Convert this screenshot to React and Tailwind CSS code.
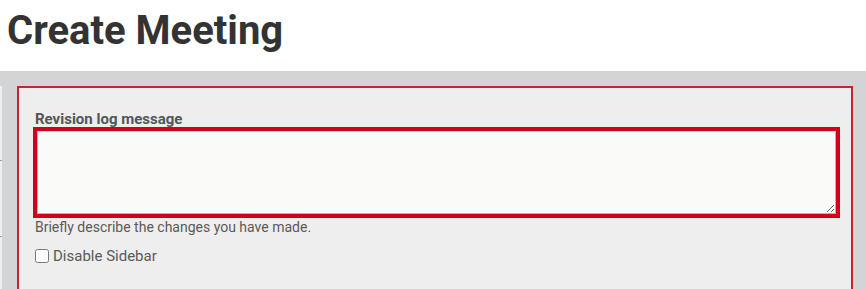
import React from "react"

const App = () => {
  return (
    <div className="min-h-[289px] bg-white font-['Roboto',_'Liberation_Sans',_sans-serif]">
      {/* header */}
      <div className="h-[71px] pt-[11px] pl-[7px]">
        <h1 className="text-[40px] leading-[40px] font-bold text-[#333333]">Create Meeting</h1>
      </div>

      {/* gray band */}
      <div className="flex h-[218px] overflow-hidden bg-[#d3d4d6] pt-[15px]">
        <div className="w-[2px] shrink-0 bg-[#efefef]">
          <div className="h-[75px] border-b border-[#9a9a9a]" />
          <div className="h-[76px] border-b border-[#9a9a9a]" />
        </div>

        <div className="ml-[15px] mr-[13px] flex-1 border-2 border-b-0 border-[#c1272d] bg-[#eeeeee] pl-[14px] pt-[23px]">
          <label className="block h-[16px] pl-[2px] text-[15px] leading-[16px] font-bold text-[#555555]">
            Revision log message
          </label>

          <div className="mr-[11px] border-4 border-[#d0021b]">
            <textarea className="block h-[83px] w-full resize-y border border-[#b4b4b4] border-t-[#d8d8d8] bg-[#fafaf9] outline-none" />
          </div>

          <div className="pl-[2px] pt-[1px] text-[14px] leading-[16px] text-[#5a5a5a]">
            Briefly describe the changes you have made.
          </div>

          <label className="mt-[13px] flex items-center gap-[4px] pl-[2px] text-[15px] leading-[16px] text-[#5a5a5a]">
            <input type="checkbox" className="m-0 h-[14px] w-[14px]" />
            Disable Sidebar
          </label>
        </div>
      </div>
    </div>
  )
}

export default App
